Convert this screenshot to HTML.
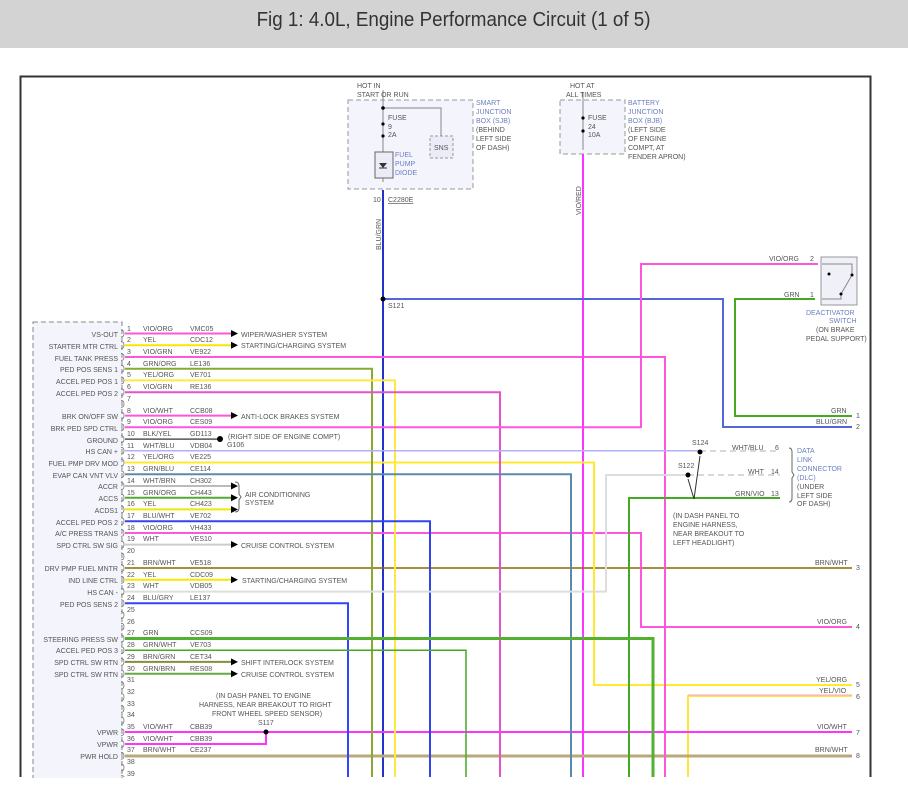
<!DOCTYPE html>
<html><head><meta charset="utf-8"><style>
html,body{margin:0;padding:0;background:#fff;width:908px;height:806px;overflow:hidden}
.hdr{position:absolute;left:0;top:0;width:908px;height:48px;background:#d3d3d3;text-align:center;font:20px/40px "Liberation Sans",sans-serif;color:#333}
.hdr span{display:inline-block;transform:scaleX(0.94)}
svg{position:absolute;left:0;top:0}
text{font-family:"Liberation Sans",sans-serif;font-size:7px;fill:#555}
.r{text-anchor:end}
.b{fill:#6a7fc0}
</style></head><body>
<div class="hdr"><span>Fig 1: 4.0L, Engine Performance Circuit (1 of 5)</span></div>
<svg width="908" height="806" viewBox="0 0 908 806">
<path d="M20.5 777V76.5H870.5V777" fill="none" stroke="#333" stroke-width="2"/>
<rect x="33" y="322" width="89" height="460" fill="#f4f4fc" stroke="#888" stroke-dasharray="5,3"/>
<rect x="348" y="100" width="125" height="89" fill="#f4f4fc" stroke="#999" stroke-dasharray="5,3"/>
<rect x="430" y="136" width="23" height="22" fill="#ececf8" stroke="#999" stroke-dasharray="3,2"/>
<text x="434" y="150">SNS</text>
<path d="M383 90V182M383 108H441V136" fill="none" stroke="#888"/>
<rect x="375" y="152" width="18" height="26" fill="#ececf8" stroke="#666"/>
<path d="M379 163h8l-4 5z" fill="#333"/><path d="M379 168h8" stroke="#333"/>
<circle cx="383" cy="108" r="1.8" fill="#000"/><circle cx="383" cy="124" r="1.6" fill="#000"/><circle cx="383" cy="136" r="1.6" fill="#000"/>
<text x="357" y="88">HOT IN</text><text x="357" y="97">START OR RUN</text>
<text x="388" y="120">FUSE</text><text x="388" y="129">9</text><text x="388" y="137">2A</text>
<text class="b" x="395" y="157">FUEL</text><text class="b" x="395" y="166">PUMP</text><text class="b" x="395" y="175">DIODE</text>
<text class="b" x="476" y="105">SMART</text><text class="b" x="476" y="114">JUNCTION</text><text class="b" x="476" y="123">BOX (SJB)</text>
<text x="476" y="132">(BEHIND</text><text x="476" y="141">LEFT SIDE</text><text x="476" y="150">OF DASH)</text>
<text x="373" y="202">10</text><text x="388" y="202" style="text-decoration:underline">C2280E</text>
<rect x="560" y="100" width="65" height="54" fill="#f4f4fc" stroke="#999" stroke-dasharray="5,3"/>
<path d="M583 92V150" stroke="#888"/>
<circle cx="583" cy="118" r="1.6" fill="#000"/><circle cx="583" cy="131" r="1.6" fill="#000"/>
<text x="570" y="88">HOT AT</text><text x="566" y="97">ALL TIMES</text>
<text x="588" y="120">FUSE</text><text x="588" y="129">24</text><text x="588" y="137">10A</text>
<text class="b" x="628" y="105">BATTERY</text><text class="b" x="628" y="114">JUNCTION</text><text class="b" x="628" y="123">BOX (BJB)</text>
<text x="628" y="132">(LEFT SIDE</text><text x="628" y="141">OF ENGINE</text><text x="628" y="150">COMPT, AT</text><text x="628" y="159">FENDER APRON)</text>
<path d="M583 154V777" stroke="#ff33ff" stroke-width="2"/>
<text x="0" y="0" transform="translate(581,215) rotate(-90)">VIO/RED</text>
<path d="M383 190V777" stroke="#2233cc" stroke-width="2"/>
<text x="0" y="0" transform="translate(381,250) rotate(-90)">BLU/GRN</text>
<path d="M383 299H723V427H852" fill="none" stroke="#5566dd" stroke-width="2"/>
<circle cx="383" cy="299" r="2.5" fill="#000"/><text x="388" y="308">S121</text>
<rect x="821" y="257" width="36" height="48" fill="#f0f0f8" stroke="#999"/>
<path d="M822 264H852V275L841 294V299H822" fill="none" stroke="#888"/>
<circle cx="829" cy="274" r="1.5" fill="#000"/><circle cx="852" cy="275" r="1.5" fill="#000"/><circle cx="841" cy="294" r="1.5" fill="#000"/>
<path d="M641 428V264H818" fill="none" stroke="#ff55dd" stroke-width="2"/>
<path d="M815 299H735V416H852" fill="none" stroke="#44aa22" stroke-width="2"/>
<text x="769" y="261">VIO/ORG</text><text x="810" y="261">2</text>
<text x="784" y="297">GRN</text><text x="810" y="297">1</text>
<text class="b" x="806" y="315">DEACTIVATOR</text><text class="b" x="829" y="323">SWITCH</text>
<text x="816" y="332">(ON BRAKE</text><text x="806" y="341">PEDAL SUPPORT)</text>
<text x="831" y="413">GRN</text><text x="856" y="418">1</text>
<text x="816" y="424">BLU/GRN</text><text x="856" y="429">2</text>
<path d="M125 568H852" stroke="#8a6a00" stroke-width="1.5"/><text x="815" y="565">BRN/WHT</text><text x="856" y="570">3</text>
<path d="M125 533H641V627H852" fill="none" stroke="#ff55dd" stroke-width="2"/><text x="817" y="624">VIO/ORG</text><text x="856" y="629">4</text>
<path d="M125 462.5H594V685H852" fill="none" stroke="#ffe830" stroke-width="2"/><text x="816" y="682">YEL/ORG</text><text x="856" y="687">5</text>
<path d="M852 696H688V777" fill="none" stroke="#ffe830" stroke-width="2"/><path d="M852 695H688" stroke="#ff99ee" stroke-width="1"/><text x="819" y="693">YEL/VIO</text><text x="856" y="699">6</text>
<path d="M125 732H852" stroke="#ff33ff" stroke-width="2"/><text x="817" y="729">VIO/WHT</text><text x="856" y="735">7</text>
<path d="M125 756H852" stroke="#bba878" stroke-width="3"/><text x="815" y="752">BRN/WHT</text><text x="856" y="758">8</text>
<path d="M125 357H665V777" fill="none" stroke="#ff55dd" stroke-width="2"/>
<path d="M125 368.7H372V777" fill="none" stroke="#88aa33" stroke-width="2"/>
<path d="M125 380.4H395V777" fill="none" stroke="#ffe840" stroke-width="2"/>
<path d="M125 392.2H500V777" fill="none" stroke="#e055cc" stroke-width="2"/>
<path d="M125 427.3H641" stroke="#ff55dd" stroke-width="2"/>
<path d="M125 439.1H218" stroke="#555" stroke-width="1.5"/>
<circle cx="220" cy="439" r="3" fill="#000"/>
<text x="228" y="439">(RIGHT SIDE OF ENGINE COMPT)</text><text x="227" y="447">G106</text>
<path d="M125 450.8H700" stroke="#b0b0ff" stroke-width="1.5"/>
<path d="M700 451H780M688 475H780" stroke="#ccc" stroke-dasharray="6,4" stroke-width="1.5"/>
<path d="M125 474.3H571V777" fill="none" stroke="#5a8ab0" stroke-width="2"/>
<path d="M125 521.2H430V777" fill="none" stroke="#3344ee" stroke-width="2"/>
<path d="M125 591.6H606V475H688" fill="none" stroke="#ddd" stroke-width="2"/>
<path d="M780 498H629V777" fill="none" stroke="#44aa22" stroke-width="2"/>
<path d="M125 603.3H348V777" fill="none" stroke="#3344ff" stroke-width="2"/>
<path d="M125 638.5H653V777" fill="none" stroke="#55b030" stroke-width="3"/>
<path d="M125 650.2H466V777" fill="none" stroke="#44aa22" stroke-width="1.5"/>
<path d="M125 744H266V732" fill="none" stroke="#ff33ff" stroke-width="2"/>
<circle cx="266" cy="732" r="2.5" fill="#000"/><text x="258" y="725">S117</text>
<text x="216" y="698">(IN DASH PANEL TO ENGINE</text><text x="199" y="707">HARNESS, NEAR BREAKOUT TO RIGHT</text><text x="212" y="716">FRONT WHEEL SPEED SENSOR)</text>
<circle cx="700" cy="452" r="2.5" fill="#000"/><circle cx="688" cy="475" r="2.5" fill="#000"/>
<path d="M694 499L700 456M694 499L688 479" stroke="#333"/>
<text x="692" y="445">S124</text><text x="678" y="468">S122</text>
<text x="732" y="450">WHT/BLU</text><text x="775" y="450">6</text>
<text x="748" y="474">WHT</text><text x="771" y="474">14</text>
<text x="735" y="496">GRN/VIO</text><text x="771" y="496">13</text>
<path d="M789 448q3 0 3 4v20l2 3l-2 3v20q0 4-3 4" fill="none" stroke="#666"/>
<text class="b" x="797" y="453">DATA</text><text class="b" x="797" y="462">LINK</text><text class="b" x="797" y="471">CONNECTOR</text><text class="b" x="797" y="480">(DLC)</text>
<text x="797" y="489">(UNDER</text><text x="797" y="498">LEFT SIDE</text><text x="797" y="506">OF DASH)</text>
<text x="673" y="518">(IN DASH PANEL TO</text><text x="673" y="527">ENGINE HARNESS,</text><text x="673" y="536">NEAR BREAKOUT TO</text><text x="673" y="545">LEFT HEADLIGHT)</text>
<g stroke-width="2" fill="none">
<path d="M125 333.5H232" stroke="#ff55dd"/><path d="M125 345.2H232" stroke="#f5e800"/>
<path d="M125 415.6H232" stroke="#ff55dd"/><path d="M125 486H232" stroke="#bbb"/>
<path d="M125 497.7H232" stroke="#55aa33"/><path d="M125 509.4H232" stroke="#f0e800"/>
<path d="M125 544.6H232" stroke="#ccc"/><path d="M125 579.8H232" stroke="#f5e800"/>
<path d="M125 661.9H232" stroke="#8a8a40"/><path d="M125 673.7H232" stroke="#66aa44"/>
</g>
<g fill="#000">
<path d="M231 330v7l7-3.5z"/><path d="M231 341.7v7l7-3.5z"/><path d="M231 412v7l7-3.5z"/>
<path d="M231 482.5v7l7-3.5z"/><path d="M231 494.2v7l7-3.5z"/><path d="M231 506v7l7-3.5z"/>
<path d="M231 541v7l7-3.5z"/><path d="M231 576.3v7l7-3.5z"/><path d="M231 658.4v7l7-3.5z"/><path d="M231 670.2v7l7-3.5z"/>
</g>
<path d="M235 482q4 0 4 4v8l2 3l-2 3v8q0 4-4 4" fill="none" stroke="#666"/>
<text x="241" y="337">WIPER/WASHER SYSTEM</text><text x="241" y="348">STARTING/CHARGING SYSTEM</text>
<text x="241" y="419">ANTI-LOCK BRAKES SYSTEM</text>
<text x="245" y="497">AIR CONDITIONING</text><text x="245" y="505">SYSTEM</text>
<text x="241" y="548">CRUISE CONTROL SYSTEM</text><text x="242" y="583">STARTING/CHARGING SYSTEM</text>
<text x="241" y="665">SHIFT INTERLOCK SYSTEM</text><text x="241" y="677">CRUISE CONTROL SYSTEM</text>
<g fill="none" stroke="#777" stroke-width="0.8">
<path d="M121 330q3 0 3 3.5q0 3.5-3 3.5M121 341.7q3 0 3 3.5q0 3.5-3 3.5M121 353.5q3 0 3 3.5q0 3.5-3 3.5M121 365.2q3 0 3 3.5q0 3.5-3 3.5M121 376.9q3 0 3 3.5q0 3.5-3 3.5M121 388.7q3 0 3 3.5q0 3.5-3 3.5M121 400.4q3 0 3 3.5q0 3.5-3 3.5M121 412.1q3 0 3 3.5q0 3.5-3 3.5M121 423.8q3 0 3 3.5q0 3.5-3 3.5M121 435.6q3 0 3 3.5q0 3.5-3 3.5M121 447.3q3 0 3 3.5q0 3.5-3 3.5M121 459q3 0 3 3.5q0 3.5-3 3.5M121 470.8q3 0 3 3.5q0 3.5-3 3.5M121 482.5q3 0 3 3.5q0 3.5-3 3.5M121 494.2q3 0 3 3.5q0 3.5-3 3.5M121 505.9q3 0 3 3.5q0 3.5-3 3.5M121 517.7q3 0 3 3.5q0 3.5-3 3.5M121 529.4q3 0 3 3.5q0 3.5-3 3.5M121 541.1q3 0 3 3.5q0 3.5-3 3.5M121 552.9q3 0 3 3.5q0 3.5-3 3.5M121 564.6q3 0 3 3.5q0 3.5-3 3.5M121 576.3q3 0 3 3.5q0 3.5-3 3.5M121 588.1q3 0 3 3.5q0 3.5-3 3.5M121 599.8q3 0 3 3.5q0 3.5-3 3.5M121 611.5q3 0 3 3.5q0 3.5-3 3.5M121 623.2q3 0 3 3.5q0 3.5-3 3.5M121 635q3 0 3 3.5q0 3.5-3 3.5M121 646.7q3 0 3 3.5q0 3.5-3 3.5M121 658.4q3 0 3 3.5q0 3.5-3 3.5M121 670.2q3 0 3 3.5q0 3.5-3 3.5M121 681.9q3 0 3 3.5q0 3.5-3 3.5M121 693.6q3 0 3 3.5q0 3.5-3 3.5M121 705.4q3 0 3 3.5q0 3.5-3 3.5M121 717.1q3 0 3 3.5q0 3.5-3 3.5M121 728.8q3 0 3 3.5q0 3.5-3 3.5M121 740.5q3 0 3 3.5q0 3.5-3 3.5M121 752.3q3 0 3 3.5q0 3.5-3 3.5M121 764q3 0 3 3.5q0 3.5-3 3.5M121 775.7q3 0 3 1.3"/>
</g>
<text x="127" y="331">1</text><text x="143" y="331">VIO/ORG</text><text x="190" y="331">VMC05</text>
<text x="127" y="342">2</text><text x="143" y="342">YEL</text><text x="190" y="342">CDC12</text>
<text x="127" y="354">3</text><text x="143" y="354">VIO/GRN</text><text x="190" y="354">VE922</text>
<text x="127" y="366">4</text><text x="143" y="366">GRN/ORG</text><text x="190" y="366">LE136</text>
<text x="127" y="377">5</text><text x="143" y="377">YEL/ORG</text><text x="190" y="377">VE701</text>
<text x="127" y="389">6</text><text x="143" y="389">VIO/GRN</text><text x="190" y="389">RE136</text>
<text x="127" y="401">7</text>
<text x="127" y="413">8</text><text x="143" y="413">VIO/WHT</text><text x="190" y="413">CCB08</text>
<text x="127" y="424">9</text><text x="143" y="424">VIO/ORG</text><text x="190" y="424">CES09</text>
<text x="127" y="436">10</text><text x="143" y="436">BLK/YEL</text><text x="190" y="436">GD113</text>
<text x="127" y="448">11</text><text x="143" y="448">WHT/BLU</text><text x="190" y="448">VDB04</text>
<text x="127" y="459">12</text><text x="143" y="459">YEL/ORG</text><text x="190" y="459">VE225</text>
<text x="127" y="471">13</text><text x="143" y="471">GRN/BLU</text><text x="190" y="471">CE114</text>
<text x="127" y="483">14</text><text x="143" y="483">WHT/BRN</text><text x="190" y="483">CH302</text>
<text x="127" y="495">15</text><text x="143" y="495">GRN/ORG</text><text x="190" y="495">CH443</text>
<text x="127" y="506">16</text><text x="143" y="506">YEL</text><text x="190" y="506">CH423</text>
<text x="127" y="518">17</text><text x="143" y="518">BLU/WHT</text><text x="190" y="518">VE702</text>
<text x="127" y="530">18</text><text x="143" y="530">VIO/ORG</text><text x="190" y="530">VH433</text>
<text x="127" y="541">19</text><text x="143" y="541">WHT</text><text x="190" y="541">VES10</text>
<text x="127" y="553">20</text>
<text x="127" y="565">21</text><text x="143" y="565">BRN/WHT</text><text x="190" y="565">VE518</text>
<text x="127" y="577">22</text><text x="143" y="577">YEL</text><text x="190" y="577">CDC09</text>
<text x="127" y="588">23</text><text x="143" y="588">WHT</text><text x="190" y="588">VDB05</text>
<text x="127" y="600">24</text><text x="143" y="600">BLU/GRY</text><text x="190" y="600">LE137</text>
<text x="127" y="612">25</text><text x="127" y="624">26</text>
<text x="127" y="635">27</text><text x="143" y="635">GRN</text><text x="190" y="635">CCS09</text>
<text x="127" y="647">28</text><text x="143" y="647">GRN/WHT</text><text x="190" y="647">VE703</text>
<text x="127" y="659">29</text><text x="143" y="659">BRN/GRN</text><text x="190" y="659">CET34</text>
<text x="127" y="671">30</text><text x="143" y="671">GRN/BRN</text><text x="190" y="671">RES08</text>
<text x="127" y="682">31</text><text x="127" y="694">32</text><text x="127" y="706">33</text><text x="127" y="717">34</text>
<text x="127" y="729">35</text><text x="143" y="729">VIO/WHT</text><text x="190" y="729">CBB39</text>
<text x="127" y="741">36</text><text x="143" y="741">VIO/WHT</text><text x="190" y="741">CBB39</text>
<text x="127" y="752">37</text><text x="143" y="752">BRN/WHT</text><text x="190" y="752">CE237</text>
<text x="127" y="764">38</text><text x="127" y="776">39</text>
<text class="r" x="118" y="337">VS-OUT</text>
<text class="r" x="118" y="349">STARTER MTR CTRL</text>
<text class="r" x="118" y="361">FUEL TANK PRESS</text>
<text class="r" x="118" y="372">PED POS SENS 1</text>
<text class="r" x="118" y="384">ACCEL PED POS 1</text>
<text class="r" x="118" y="396">ACCEL PED POS 2</text>
<text class="r" x="118" y="419">BRK ON/OFF SW</text>
<text class="r" x="118" y="431">BRK PED SPD CTRL</text>
<text class="r" x="118" y="443">GROUND</text>
<text class="r" x="118" y="454">HS CAN +</text>
<text class="r" x="118" y="466">FUEL PMP DRV MOD</text>
<text class="r" x="118" y="478">EVAP CAN VNT VLV</text>
<text class="r" x="118" y="489">ACCR</text>
<text class="r" x="118" y="501">ACCS</text>
<text class="r" x="118" y="513">ACDS1</text>
<text class="r" x="118" y="525">ACCEL PED POS 2</text>
<text class="r" x="118" y="536">A/C PRESS TRANS</text>
<text class="r" x="118" y="548">SPD CTRL SW SIG</text>
<text class="r" x="118" y="571">DRV PMP FUEL MNTR</text>
<text class="r" x="118" y="583">IND LINE CTRL</text>
<text class="r" x="118" y="595">HS CAN -</text>
<text class="r" x="118" y="607">PED POS SENS 2</text>
<text class="r" x="118" y="642">STEERING PRESS SW</text>
<text class="r" x="118" y="653">ACCEL PED POS 3</text>
<text class="r" x="118" y="665">SPD CTRL SW RTN</text>
<text class="r" x="118" y="677">SPD CTRL SW RTN</text>
<text class="r" x="118" y="735">VPWR</text>
<text class="r" x="118" y="747">VPWR</text>
<text class="r" x="118" y="759">PWR HOLD</text>
<rect x="0" y="778" width="908" height="28" fill="#fff"/>
</svg>
</body></html>
